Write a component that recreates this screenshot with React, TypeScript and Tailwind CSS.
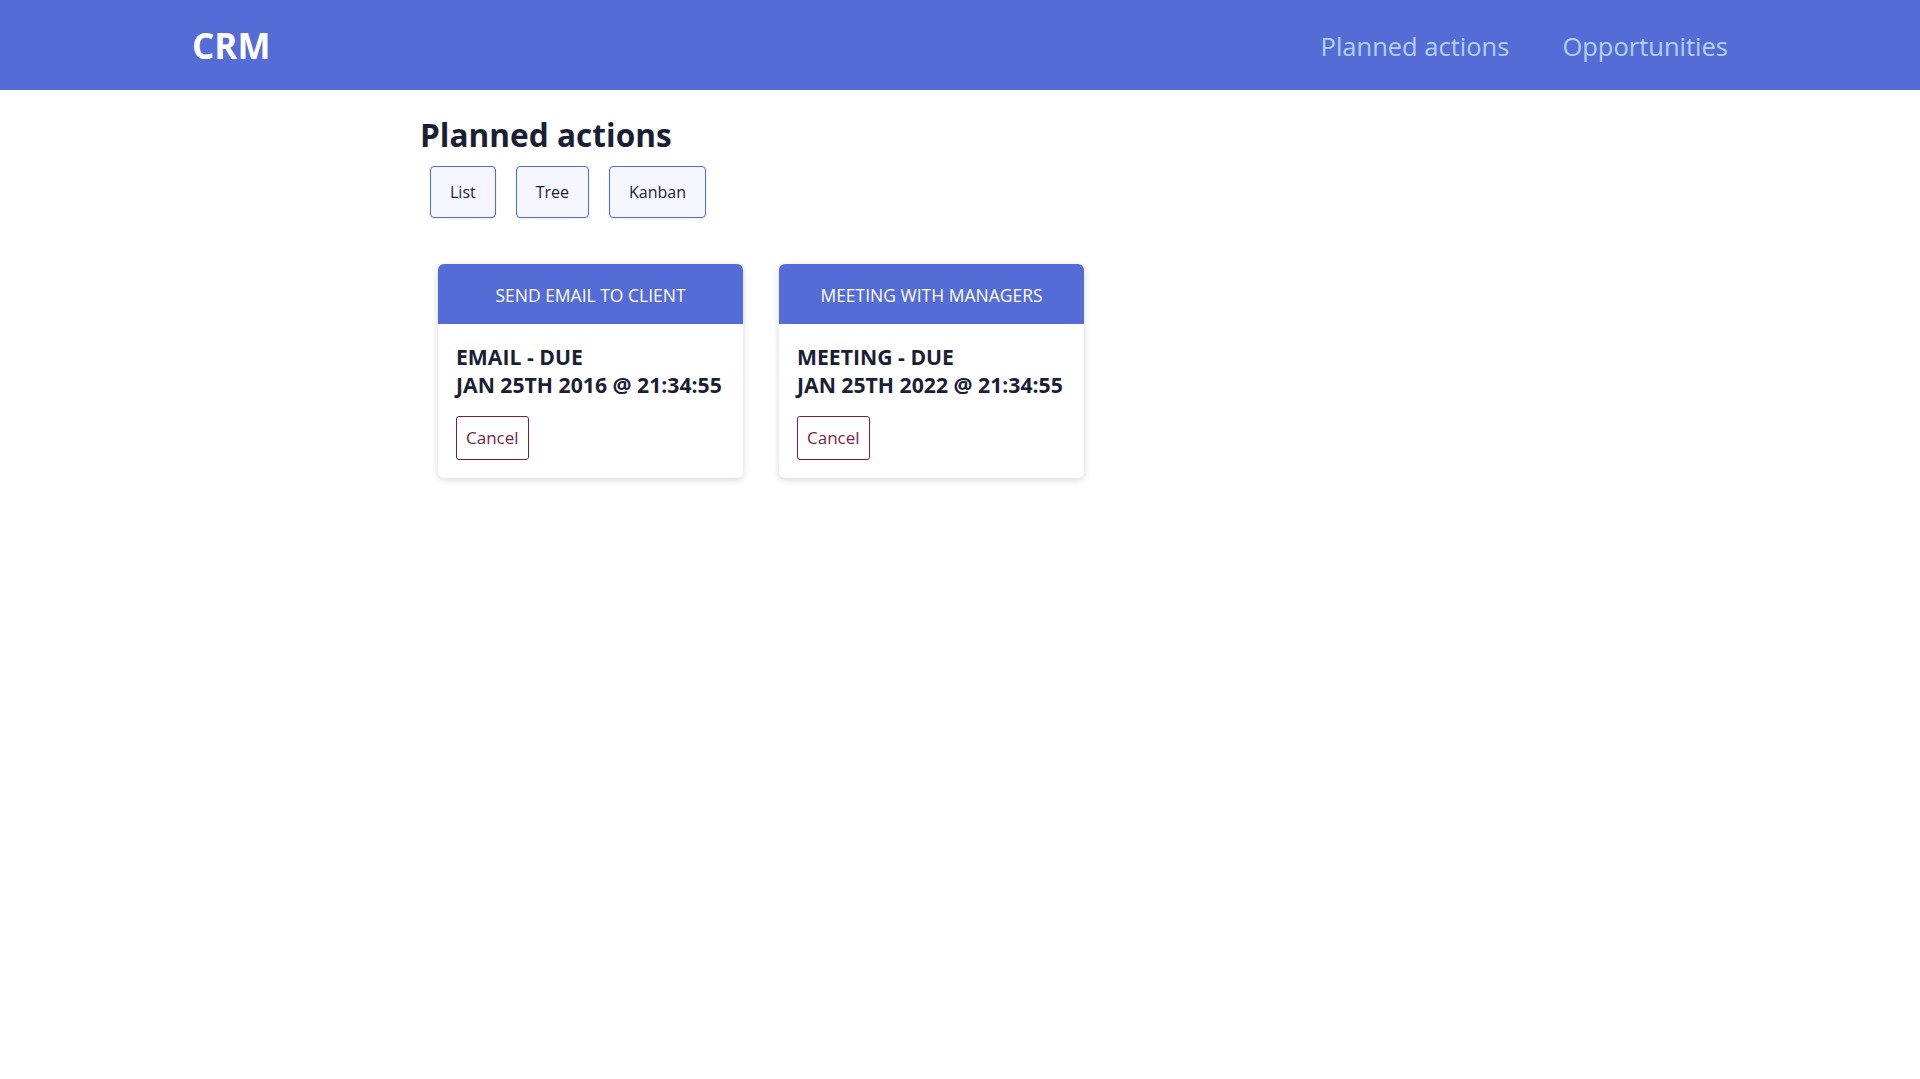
import React from "react";

const font = { fontFamily: '"Open Sans", "Noto Sans", sans-serif' };

function Card({ title, kind, date }: { title: string; kind: string; date: string }) {
  return (
    <div className="w-[305px] rounded-[6px] bg-white shadow-[0_2px_7px_rgba(0,0,0,0.16)] overflow-hidden">
      <div className="h-[60px] pt-[2px] bg-[#556bd6] flex items-center justify-center text-white text-[17.5px] uppercase">
        {title}
      </div>
      <div className="px-[18px] pt-[19px] pb-[18px]">
        <div className="text-[#1a1f36] font-bold text-[21.2px] leading-[28px] uppercase whitespace-nowrap">
          <div>{kind} - DUE</div>
          <div>{date}</div>
        </div>
        <button className="mt-[17px] h-[44px] px-[9px] border border-[#7d1d45] rounded-[3px] text-[#7d1d45] text-[17px] bg-white">
          Cancel
        </button>
      </div>
    </div>
  );
}

export default function App() {
  return (
    <div className="min-h-screen bg-white" style={font}>
      <header className="h-[90px] bg-[#556bd6]">
        <div className="mx-auto max-w-[1536px] h-full pt-[2px] flex items-center justify-between">
          <div className="text-white font-bold text-[35px]">CRM</div>
          <nav className="flex items-center gap-[53px] text-[25.5px] text-[#b3d0ff]">
            <a>Planned actions</a>
            <a>Opportunities</a>
          </nav>
        </div>
      </header>
      <main className="mx-auto w-[1080px]">
        <h1 className="mt-[23px] text-[31.6px] font-bold text-[#1a1f36] leading-[44px]">Planned actions</h1>
        <div className="mt-[9px] ml-[10px] flex gap-[20px]">
          {["List", "Tree", "Kanban"].map((t) => (
            <button
              key={t}
              className="h-[52px] px-[19px] border border-[#556bd6] rounded-[4px] bg-[#f6f7fe] text-[16px] font-medium text-[#1a1f36] shadow-[0_1px_3px_rgba(0,0,0,0.08)]"
            >
              {t}
            </button>
          ))}
        </div>
        <div className="mt-[46px] ml-[18px] flex gap-[36px]">
          <Card title="Send email to client" kind="Email" date="Jan 25th 2016 @ 21:34:55" />
          <Card title="Meeting with managers" kind="Meeting" date="Jan 25th 2022 @ 21:34:55" />
        </div>
      </main>
    </div>
  );
}
